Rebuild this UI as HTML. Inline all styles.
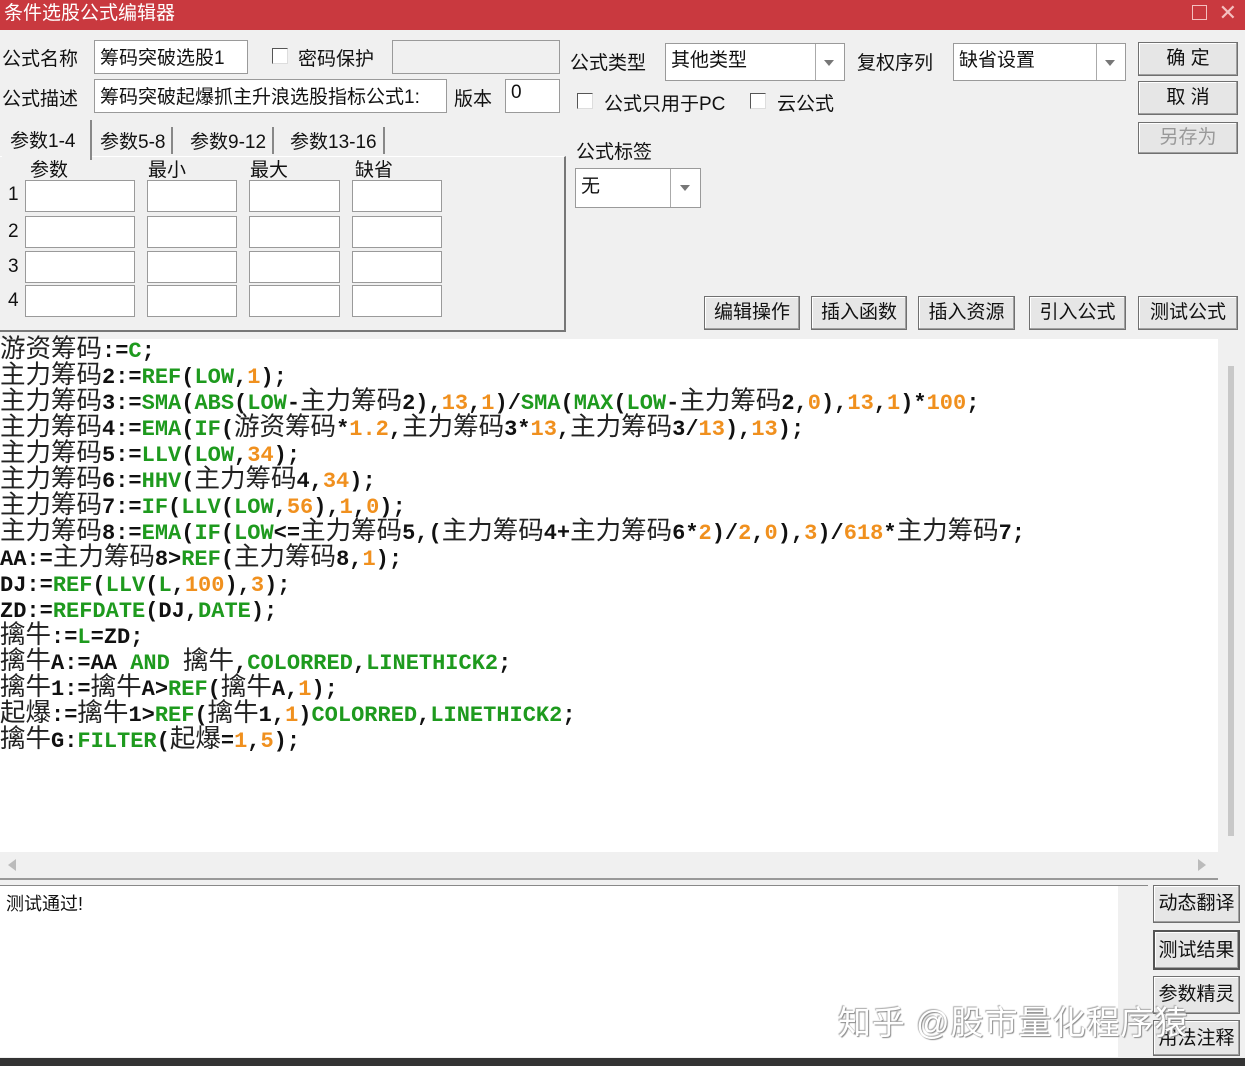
<!DOCTYPE html><html><head><meta charset="utf-8"><style>
*{margin:0;padding:0;box-sizing:border-box}
body{width:1245px;height:1066px;background:#f0f0f0;position:relative;overflow:hidden;font-family:"Liberation Sans","Noto Sans CJK SC",sans-serif;font-size:19px;color:#111}
.a{position:absolute}
.in{position:absolute;background:#fff;border:1px solid #9a9a9a;padding:2px 5px;white-space:nowrap}
.btn{position:absolute;background:#e6e6e6;border:1px solid #707070;box-shadow:inset -1px -1px 0 #a0a0a0,inset 1px 1px 0 #fff;text-align:center;font-size:19px}
.cb{position:absolute;width:16px;height:16px;background:#fff;border:1px solid #555;border-right-color:#ddd;border-bottom-color:#ddd}
.dd{position:absolute;width:1px;background:#aaa}
.arr{position:absolute;width:0;height:0;border-left:5px solid transparent;border-right:5px solid transparent;border-top:6px solid #777}
#code{position:absolute;left:0;top:339px;width:1218px;height:513px;background:#fff;font-family:"Liberation Mono","Noto Sans CJK SC",monospace;font-weight:bold;font-size:22px;white-space:pre}
#code div{height:26px;line-height:26px;overflow:visible}
#code .c{font-family:"Noto Sans CJK SC",sans-serif;font-weight:normal;font-size:25.5px;line-height:0;color:#222}
.g{color:#1e9a1e}.o{color:#f0901e}
</style></head><body>
<div class="a" style="left:0;top:0;width:1245px;height:30px;background:#c9393f;color:#fff;font-size:19px;line-height:28px;padding-left:4px">条件选股公式编辑器
<span class="a" style="right:38px;top:5px;width:15px;height:15px;border:1.5px solid #f4c0c0"></span><span class="a" style="right:8px;top:-1px;font-size:22px;color:#f4c0c0">✕</span></div>
<div class="a" style="left:2px;top:44px">公式名称</div>
<div class="in" style="left:94px;top:40px;width:154px;height:34px">筹码突破选股1</div>
<div class="cb" style="left:272px;top:48px"></div><div class="a" style="left:298px;top:44px">密码保护</div>
<div class="in" style="left:392px;top:40px;width:168px;height:34px;background:#f0f0f0"></div>
<div class="a" style="left:2px;top:84px">公式描述</div>
<div class="in" style="left:94px;top:79px;width:353px;height:34px">筹码突破起爆抓主升浪选股指标公式1:</div>
<div class="a" style="left:454px;top:84px">版本</div>
<div class="in" style="left:505px;top:79px;width:55px;height:34px">0</div>
<div class="a" style="left:570px;top:48px">公式类型</div>
<div class="in" style="left:665px;top:43px;width:180px;height:38px;line-height:30px">其他类型</div><div class="dd" style="left:815px;top:44px;height:36px"></div><div class="arr" style="left:824px;top:60px"></div>
<div class="a" style="left:857px;top:48px">复权序列</div>
<div class="in" style="left:953px;top:43px;width:173px;height:38px;line-height:30px">缺省设置</div><div class="dd" style="left:1096px;top:44px;height:36px"></div><div class="arr" style="left:1105px;top:60px"></div>
<div class="cb" style="left:577px;top:93px"></div><div class="a" style="left:604px;top:89px">公式只用于PC</div>
<div class="cb" style="left:750px;top:93px"></div><div class="a" style="left:777px;top:89px">云公式</div>
<div class="a" style="left:576px;top:137px">公式标签</div>
<div class="in" style="left:575px;top:168px;width:126px;height:40px;line-height:32px">无</div><div class="dd" style="left:670px;top:169px;height:38px"></div><div class="arr" style="left:680px;top:185px"></div>
<div class="btn" style="left:1138px;top:42px;width:100px;height:34px;line-height:32px">确 定</div>
<div class="btn" style="left:1138px;top:81px;width:100px;height:34px;line-height:32px">取 消</div>
<div class="btn" style="left:1138px;top:122px;width:100px;height:32px;line-height:30px;color:#999">另存为</div>
<div class="a" style="left:0;top:156px;width:566px;height:176px;border-right:2px solid #777;border-bottom:2px solid #777;border-top:1px solid #fff"></div>
<div class="a" style="left:2px;top:120px;width:90px;height:40px;background:#f0f0f0;border-right:2px solid #888;padding:6px 0 0 8px">参数1-4</div>
<div class="a" style="left:100px;top:127px;border-right:2px solid #888;padding-right:6px">参数5-8</div>
<div class="a" style="left:190px;top:127px;border-right:2px solid #888;padding-right:6px">参数9-12</div>
<div class="a" style="left:290px;top:127px;border-right:2px solid #888;padding-right:6px">参数13-16</div>
<div class="a" style="left:30px;top:155px">参数</div><div class="a" style="left:148px;top:155px">最小</div><div class="a" style="left:250px;top:155px">最大</div><div class="a" style="left:355px;top:155px">缺省</div>
<div class="a" style="left:8px;top:184px">1</div><div class="a" style="left:8px;top:221px">2</div><div class="a" style="left:8px;top:256px">3</div><div class="a" style="left:8px;top:290px">4</div>
<div class="in" style="left:25px;top:180px;width:110px;height:32px"></div><div class="in" style="left:147px;top:180px;width:90px;height:32px"></div><div class="in" style="left:249px;top:180px;width:91px;height:32px"></div><div class="in" style="left:352px;top:180px;width:90px;height:32px"></div>
<div class="in" style="left:25px;top:216px;width:110px;height:32px"></div><div class="in" style="left:147px;top:216px;width:90px;height:32px"></div><div class="in" style="left:249px;top:216px;width:91px;height:32px"></div><div class="in" style="left:352px;top:216px;width:90px;height:32px"></div>
<div class="in" style="left:25px;top:251px;width:110px;height:32px"></div><div class="in" style="left:147px;top:251px;width:90px;height:32px"></div><div class="in" style="left:249px;top:251px;width:91px;height:32px"></div><div class="in" style="left:352px;top:251px;width:90px;height:32px"></div>
<div class="in" style="left:25px;top:285px;width:110px;height:32px"></div><div class="in" style="left:147px;top:285px;width:90px;height:32px"></div><div class="in" style="left:249px;top:285px;width:91px;height:32px"></div><div class="in" style="left:352px;top:285px;width:90px;height:32px"></div>
<div class="btn" style="left:704px;top:296px;width:96px;height:34px;line-height:32px">编辑操作</div>
<div class="btn" style="left:811px;top:296px;width:96px;height:34px;line-height:32px">插入函数</div>
<div class="btn" style="left:918px;top:296px;width:97px;height:34px;line-height:32px">插入资源</div>
<div class="btn" style="left:1029px;top:296px;width:97px;height:34px;line-height:32px">引入公式</div>
<div class="btn" style="left:1138px;top:296px;width:100px;height:34px;line-height:32px">测试公式</div>
<div id="code"><div><span class="c">游资筹码</span>:=<span class="g">C</span>;</div><div><span class="c">主力筹码</span>2:=<span class="g">REF</span>(<span class="g">LOW</span>,<span class="o">1</span>);</div><div><span class="c">主力筹码</span>3:=<span class="g">SMA</span>(<span class="g">ABS</span>(<span class="g">LOW</span>-<span class="c">主力筹码</span>2),<span class="o">13</span>,<span class="o">1</span>)/<span class="g">SMA</span>(<span class="g">MAX</span>(<span class="g">LOW</span>-<span class="c">主力筹码</span>2,<span class="o">0</span>),<span class="o">13</span>,<span class="o">1</span>)*<span class="o">100</span>;</div><div><span class="c">主力筹码</span>4:=<span class="g">EMA</span>(<span class="g">IF</span>(<span class="c">游资筹码</span>*<span class="o">1.2</span>,<span class="c">主力筹码</span>3*<span class="o">13</span>,<span class="c">主力筹码</span>3/<span class="o">13</span>),<span class="o">13</span>);</div><div><span class="c">主力筹码</span>5:=<span class="g">LLV</span>(<span class="g">LOW</span>,<span class="o">34</span>);</div><div><span class="c">主力筹码</span>6:=<span class="g">HHV</span>(<span class="c">主力筹码</span>4,<span class="o">34</span>);</div><div><span class="c">主力筹码</span>7:=<span class="g">IF</span>(<span class="g">LLV</span>(<span class="g">LOW</span>,<span class="o">56</span>),<span class="o">1</span>,<span class="o">0</span>);</div><div><span class="c">主力筹码</span>8:=<span class="g">EMA</span>(<span class="g">IF</span>(<span class="g">LOW</span>&lt;=<span class="c">主力筹码</span>5,(<span class="c">主力筹码</span>4+<span class="c">主力筹码</span>6*<span class="o">2</span>)/<span class="o">2</span>,<span class="o">0</span>),<span class="o">3</span>)/<span class="o">618</span>*<span class="c">主力筹码</span>7;</div><div>AA:=<span class="c">主力筹码</span>8&gt;<span class="g">REF</span>(<span class="c">主力筹码</span>8,<span class="o">1</span>);</div><div>DJ:=<span class="g">REF</span>(<span class="g">LLV</span>(<span class="g">L</span>,<span class="o">100</span>),<span class="o">3</span>);</div><div>ZD:=<span class="g">REFDATE</span>(DJ,<span class="g">DATE</span>);</div><div><span class="c">擒牛</span>:=<span class="g">L</span>=ZD;</div><div><span class="c">擒牛</span>A:=AA <span class="g">AND</span> <span class="c">擒牛</span>,<span class="g">COLORRED</span>,<span class="g">LINETHICK2</span>;</div><div><span class="c">擒牛</span>1:=<span class="c">擒牛</span>A&gt;<span class="g">REF</span>(<span class="c">擒牛</span>A,<span class="o">1</span>);</div><div><span class="c">起爆</span>:=<span class="c">擒牛</span>1&gt;<span class="g">REF</span>(<span class="c">擒牛</span>1,<span class="o">1</span>)<span class="g">COLORRED</span>,<span class="g">LINETHICK2</span>;</div><div><span class="c">擒牛</span>G:<span class="g">FILTER</span>(<span class="c">起爆</span>=<span class="o">1</span>,<span class="o">5</span>);</div></div>
<div class="a" style="left:1228px;top:366px;width:6px;height:470px;background:#c8c8c8"></div>
<div class="a" style="left:0;top:852px;width:1218px;height:28px;background:#f0f0f0;border-bottom:2px solid #999"></div>
<div class="a" style="left:8px;top:859px;border-top:6px solid transparent;border-bottom:6px solid transparent;border-right:8px solid #bbb"></div>
<div class="a" style="left:1198px;top:859px;border-top:6px solid transparent;border-bottom:6px solid transparent;border-left:8px solid #bbb"></div>
<div class="a" style="left:0;top:885px;width:1148px;height:172px;background:#fff;border-top:1px solid #888;padding:4px 6px;font-size:18px">测试通过!</div>
<div class="a" style="left:1118px;top:886px;width:30px;height:171px;background:#f0f0f0"></div>
<div class="btn" style="left:1153px;top:885px;width:87px;height:38px;line-height:36px">动态翻译</div>
<div class="btn" style="left:1153px;top:930px;width:87px;height:40px;line-height:38px;border:2px solid #555">测试结果</div>
<div class="btn" style="left:1153px;top:976px;width:87px;height:38px;line-height:36px">参数精灵</div>
<div class="btn" style="left:1153px;top:1020px;width:87px;height:36px;line-height:36px">用法注释</div>
<div class="a" style="left:838px;top:996px;font-size:33px;color:#fff;text-shadow:1px 1px 1px #888,-1px -1px 1px #aaa;letter-spacing:1px">知乎 @股市量化程序猿</div>
<div class="a" style="left:0;top:1058px;width:1245px;height:8px;background:#333"></div>
</body></html>
